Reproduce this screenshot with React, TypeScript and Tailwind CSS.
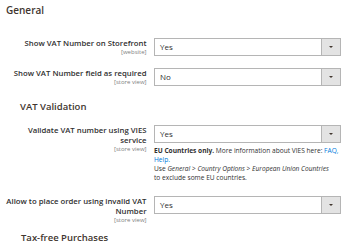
import React from "react";

/* Magento-style admin config: VAT settings */

interface FieldProps {
  label: React.ReactNode;
  scope: string;
  value: string;
  note?: React.ReactNode;
  className?: string;
}

const SelectBox: React.FC<{ value: string }> = ({ value }) => (
  <div className="flex h-[18px] w-[187px] border border-[#b5b5b5] bg-white">
    <div className="flex flex-1 items-center pl-[5px] text-[8px] leading-none text-[#303030]">
      {value}
    </div>
    <div className="flex w-[19px] items-center justify-center border-l border-[#b5b5b5] bg-[#e3e3e3]">
      <div className="h-0 w-0 border-x-[2px] border-t-[2.5px] border-x-transparent border-t-[#41362f]" />
    </div>
  </div>
);

const Field: React.FC<FieldProps> = ({ label, scope, value, note, className }) => (
  <div className={`flex items-start ${className ?? ""}`}>
    <div className="w-[147px] pr-[0.5px] text-right">
      <div className="whitespace-nowrap text-[7.75px] font-semibold leading-[10px] text-[#303030]">{label}</div>
      <div className="text-[6px] leading-[8px] text-[#808080]">{scope}</div>
    </div>
    <div className="ml-[7px]">
      <SelectBox value={value} />
      {note}
    </div>
  </div>
);

const ViesNote = (
  <div className="mt-[2.5px] whitespace-nowrap text-[6.6px] leading-[9px] text-[#303030]">
    <span className="font-bold">EU Countries only.</span> More information about VIES here:{" "}
    <span className="text-[#007bdb]">FAQ,</span>
    <br />
    <span className="text-[#007bdb]">Help.</span>
    <br />
    Use <i>General</i> &gt; <i>Country Options</i> &gt; <i>European Union Countries</i>
    <br />
    to exclude some EU countries.
  </div>
);

export default function App() {
  return (
    <div className="h-[250px] w-[350px] overflow-hidden bg-white font-['Open_Sans',sans-serif]">
      <div className="pl-[6px] pt-[4px] text-[10px] font-semibold leading-[12px] text-[#41362f]">
        General
      </div>

      <Field className="mt-[22px]" label="Show VAT Number on Storefront" scope="[website]" value="Yes" />
      <Field className="mt-[12px]" label="Show VAT Number field as required" scope="[store view]" value="No" />

      <div className="mt-[15px] pl-[20px] text-[9.5px] font-semibold leading-[12px] text-[#41362f]">
        VAT Validation
      </div>

      <Field
        className="mt-[12px]"
        label={
          <>
            Validate VAT number using VIES
            <br />
            service
          </>
        }
        scope="[store view]"
        value="Yes"
        note={ViesNote}
      />
      <Field
        className="mt-[14.5px]"
        label={
          <>
            Allow to place order using invalid VAT
            <br />
            Number
          </>
        }
        scope="[store view]"
        value="Yes"
      />

      <div className="mt-[8px] pl-[21px] text-[9.5px] font-semibold leading-[12px] text-[#41362f]">
        Tax-free Purchases
      </div>
    </div>
  );
}
